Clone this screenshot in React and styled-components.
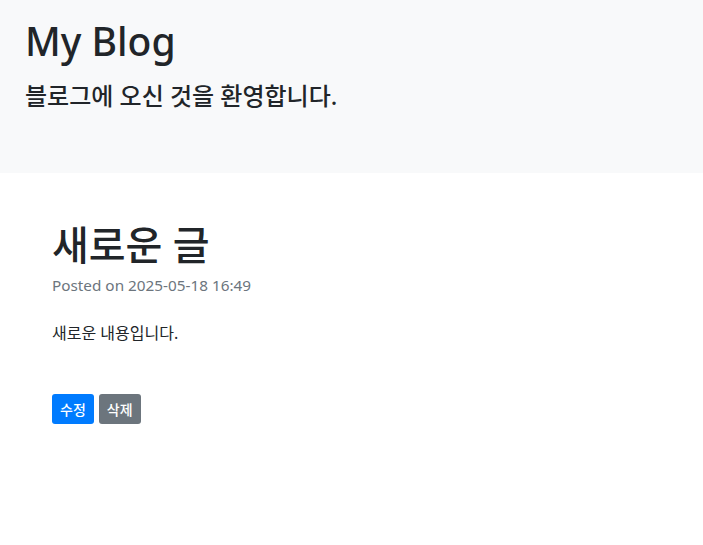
import React from 'react'
import styled, { createGlobalStyle } from 'styled-components'

const GlobalStyle = createGlobalStyle`
    body {
        margin: 0;
        background: #fff;
        color: #212529;
        font-family: "Noto Sans", "Noto Sans CJK KR", sans-serif;
        font-size: 16px;
        line-height: 1.5;
    }
`

const Jumbotron = styled.header`
    background: #f8f9fa;
    height: 173px;
    box-sizing: border-box;
    padding: 18px 25px 0;

    h1 {
        margin: 0 0 17px;
        font-size: 39px;
        font-weight: 500;
        line-height: 1.2;
    }

    p {
        margin: 0;
        font-size: 24px;
        font-weight: 500;
        line-height: 1.2;
    }
`

const Post = styled.main`
    padding: 48px 52px;

    h1 {
        margin: 0 0 5px;
        font-size: 40px;
        font-weight: 500;
        line-height: 1.2;
    }

    .meta {
        margin: 0 0 24px;
        font-size: 15.3px;
        color: #6c757d;
    }

    .content {
        margin: 0 0 49px;
        font-size: 16px;
    }
`

const Actions = styled.div`
    display: flex;
    gap: 5px;
`

const Button = styled.button`
    border: none;
    border-radius: 3px;
    padding: 0 8px;
    height: 30px;
    font-family: inherit;
    font-size: 14px;
    font-weight: 500;
    color: #fff;
    background: ${p => p.variant === 'secondary' ? '#6c757d' : '#007bff'};
    cursor: pointer;
`

export default function App () {
    return (
        <>
            <GlobalStyle />
            <Jumbotron>
                <h1>My Blog</h1>
                <p>블로그에 오신 것을 환영합니다.</p>
            </Jumbotron>
            <Post>
                <h1>새로운 글</h1>
                <p className='meta'>Posted on 2025-05-18 16:49</p>
                <p className='content'>새로운 내용입니다.</p>
                <Actions>
                    <Button>수정</Button>
                    <Button variant='secondary'>삭제</Button>
                </Actions>
            </Post>
        </>
    )
}
